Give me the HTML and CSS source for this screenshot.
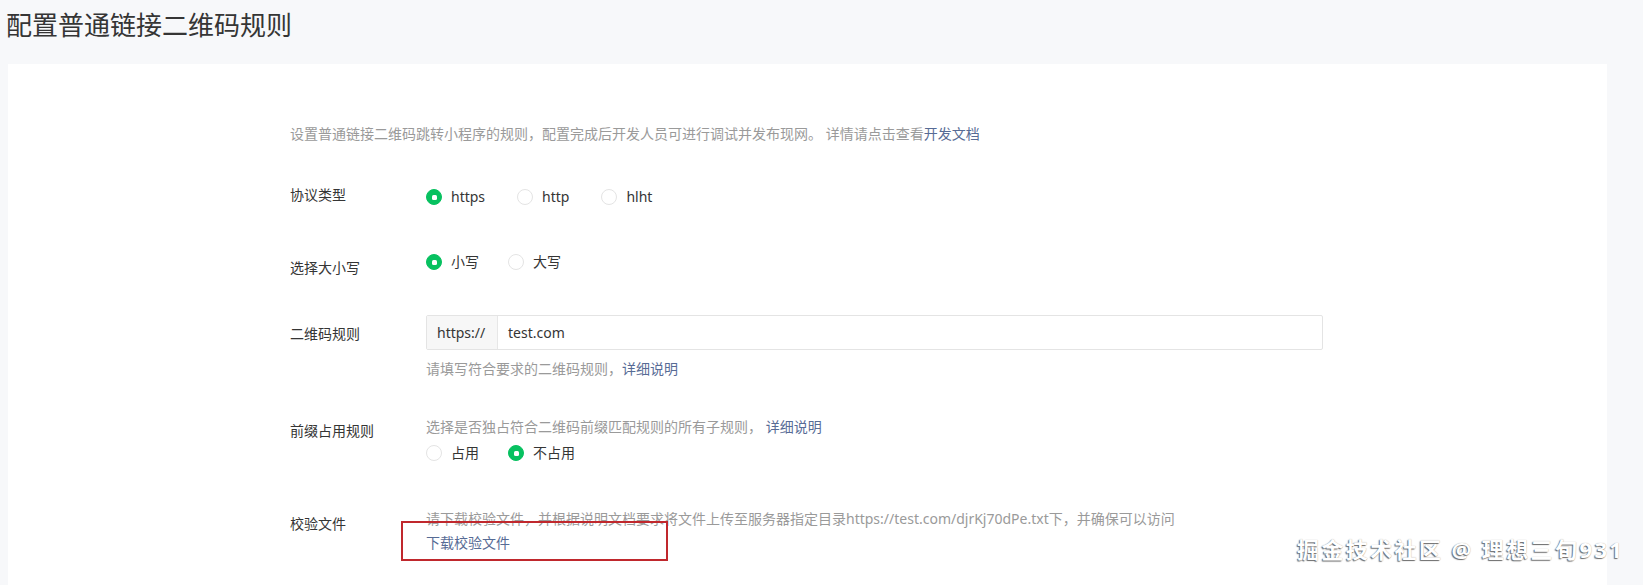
FILE: index.html
```html
<!DOCTYPE html>
<html lang="zh-CN">
<head>
<meta charset="utf-8">
<title>配置普通链接二维码规则</title>
<link rel="stylesheet" href="styles.css">
</head>
<body>
  <h1 class="page-title">配置普通链接二维码规则</h1>

  <main class="card">
    <p class="intro">设置普通链接二维码跳转小程序的规则，配置完成后开发人员可进行调试并发布现网。 详情请点击查看<a class="link" href="#">开发文档</a></p>

    <div class="form-row row-protocol">
      <div class="form-label">协议类型</div>
      <div class="form-ctrl">
        <div class="radio-group wide">
          <label class="radio is-checked"><span class="radio-dot"></span><span class="radio-text">https</span></label>
          <label class="radio"><span class="radio-dot"></span><span class="radio-text">http</span></label>
          <label class="radio"><span class="radio-dot"></span><span class="radio-text">hlht</span></label>
        </div>
      </div>
    </div>

    <div class="form-row row-case">
      <div class="form-label">选择大小写</div>
      <div class="form-ctrl">
        <div class="radio-group">
          <label class="radio is-checked"><span class="radio-dot"></span><span class="radio-text">小写</span></label>
          <label class="radio"><span class="radio-dot"></span><span class="radio-text">大写</span></label>
        </div>
      </div>
    </div>

    <div class="form-row row-rule">
      <div class="form-label">二维码规则</div>
      <div class="form-ctrl">
        <div class="input-group">
          <span class="input-prefix">https://</span>
          <span class="input-value">test.com</span>
        </div>
        <p class="hint hint-below">请填写符合要求的二维码规则，<a class="link" href="#">详细说明</a></p>
      </div>
    </div>

    <div class="form-row row-prefix">
      <div class="form-label">前缀占用规则</div>
      <div class="form-ctrl">
        <p class="hint">选择是否独占符合二维码前缀匹配规则的所有子规则， <a class="link" href="#">详细说明</a></p>
        <div class="radio-group radio-below">
          <label class="radio"><span class="radio-dot"></span><span class="radio-text">占用</span></label>
          <label class="radio is-checked"><span class="radio-dot"></span><span class="radio-text">不占用</span></label>
        </div>
      </div>
    </div>

    <div class="form-row row-file">
      <div class="form-label">校验文件</div>
      <div class="form-ctrl">
        <p class="hint">请下载校验文件，并根据说明文档要求将文件上传至服务器指定目录https://test.com/djrKj70dPe.txt下，并确保可以访问</p>
        <a class="link download" href="#">下载校验文件</a>
        <span class="mark-box"></span>
      </div>
    </div>
  </main>

  <div class="watermark">掘金技术社区 @ 理想三旬931</div>
</body>
</html>
```

FILE: styles.css
```css
* {
  box-sizing: border-box;
}

html,
body {
  margin: 0;
  height: 100%;
}

body {
  background: #f7f8fa;
  font-family: "Noto Sans", "Noto Sans CJK SC", sans-serif;
  font-size: 14px;
  line-height: 20px;
  color: #353535;
  overflow: hidden;
  position: relative;
}

p {
  margin: 0;
}

.page-title {
  margin: 0;
  padding: 8px 0 0 6px;
  font-size: 26px;
  line-height: 34px;
  font-weight: 400;
  color: #353535;
}

.card {
  margin: 22px 36px 0 8px;
  min-height: calc(100vh - 64px);
  background: #ffffff;
  padding: 60px 0 0 282px;
}

.intro {
  color: #9a9a9a;
}

.link {
  color: #576b95;
  text-decoration: none;
}

.form-row {
  display: flex;
  align-items: flex-start;
}

.form-label {
  width: 136px;
  flex-shrink: 0;
  color: #353535;
}

.form-ctrl {
  position: relative;
  flex: 1;
}

/* vertical rhythm of each row */
.row-protocol {
  margin-top: 41px;
}
.row-protocol .form-ctrl {
  padding-top: 2px;
}

.row-case {
  margin-top: 45px;
}
.row-case .form-label {
  padding-top: 6px;
}

.row-rule {
  margin-top: 37px;
}
.row-rule .form-label {
  padding-top: 9px;
}

.row-prefix {
  margin-top: 38px;
}
.row-prefix .form-label {
  padding-top: 4px;
}

.row-file {
  margin-top: 46px;
}
.row-file .form-label {
  padding-top: 5px;
}

/* radios */
.radio-group {
  display: flex;
  align-items: center;
  gap: 29px;
  height: 20px;
}

.radio-group.wide {
  gap: 32px;
}

.radio-below {
  margin-top: 6px;
}

.radio {
  display: inline-flex;
  align-items: center;
  gap: 9px;
  cursor: pointer;
}

.radio-dot {
  width: 16px;
  height: 16px;
  border-radius: 50%;
  border: 1px solid #e4e4e4;
  background: #fff;
  display: flex;
  align-items: center;
  justify-content: center;
}

.radio.is-checked .radio-dot {
  background: #07c160;
  border-color: #07c160;
}

.radio.is-checked .radio-dot::after {
  content: "";
  width: 5px;
  height: 5px;
  border-radius: 1.5px;
  background: #fff;
}

.radio-text {
  color: #353535;
}

/* prefixed input */
.input-group {
  display: flex;
  width: 897px;
  height: 35px;
  border: 1px solid #e4e4e4;
  border-radius: 2px;
  background: #fff;
}

.input-prefix {
  display: flex;
  align-items: center;
  padding: 0 10px;
  width: 71px;
  background: #f7f7f7;
  border-right: 1px solid #e7e7e7;
  color: #353535;
}

.input-value {
  display: flex;
  align-items: center;
  padding-left: 10px;
  color: #353535;
}

.hint {
  color: #9a9a9a;
}

.hint-below {
  margin-top: 9px;
}

.download {
  display: block;
  margin-top: 4px;
}

/* annotation frame around the download link */
.mark-box {
  position: absolute;
  left: -25px;
  top: 12px;
  width: 267px;
  height: 40px;
  border: 2px solid #c0282d;
  pointer-events: none;
}

.watermark {
  position: absolute;
  left: 1297px;
  top: 535px;
  font-size: 22px;
  line-height: 28px;
  font-weight: 700;
  letter-spacing: 2.4px;
  color: #ffffff;
  white-space: nowrap;
  text-shadow: -1px 1px 1px rgba(60, 60, 60, 0.75), 0 0 1px rgba(0, 0, 0, 0.35);
}
```
